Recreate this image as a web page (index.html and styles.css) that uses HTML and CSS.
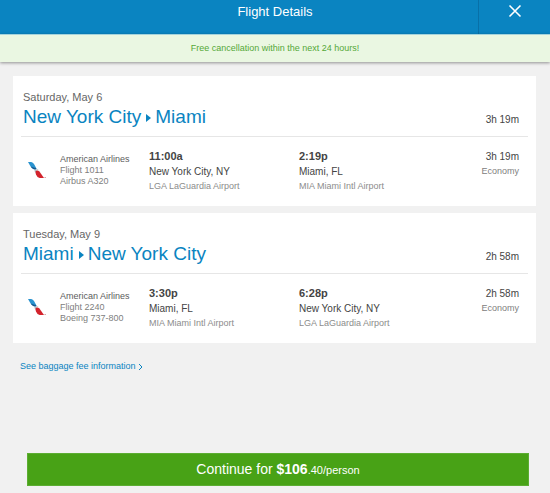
FILE: index.html
```
<!DOCTYPE html>
<html lang="en">
<head>
  <meta charset="UTF-8">
  <meta name="viewport" content="width=device-width, initial-scale=1.0">
  <title>Flight Details</title>
  <link rel="stylesheet" href="styles.css">
</head>
<body>
  <svg class="symbols" aria-hidden="true">
    <symbol id="aa-logo" viewBox="0 0 18 16">
      <path d="M0 0H3.2Q5 .3 6 2L8.6 6.8 7.6 7.4Q3.4 6.6 2 3.6z" fill="#2a93cf"/>
      <path d="M2.6 4.4L8.2 6.2 8 7.6Q4.2 7.4 2.6 4.4z" fill="#17598f"/>
      <path d="M6.4 8.2Q8 6.6 10.6 7.4L8.6 8.8Q7.4 10 7.8 11.6 6.6 10.2 6.4 8.2z" fill="#b4bcc3"/>
      <path d="M7.6 9.2Q9.6 7.8 11.4 9.6L16 16H11.6Q9 15.6 8 12.6 7.4 10.6 7.6 9.2z" fill="#d3232c"/>
      <path d="M16.4 15h1.6v1h-1.6z" fill="#d8a9ac"/>
    </symbol>
  </svg>

  <header class="header">
    <h1>Flight Details</h1>
    <button class="close" type="button" aria-label="Close">
      <svg width="14" height="14" viewBox="0 0 14 14"><path d="M1.5 1.5l11 11M12.5 1.5l-11 11" stroke="#fff" stroke-width="1.6"/></svg>
    </button>
  </header>
  <p class="notice">Free cancellation within the next 24 hours!</p>

  <main>
    <section class="card">
      <div class="card-head">
        <div>
          <p class="date">Saturday, May 6</p>
          <h2>New York City<span class="arrow"></span>Miami</h2>
        </div>
        <span class="duration">3h 19m</span>
      </div>
      <div class="flight">
        <svg class="logo" role="img" aria-label="American Airlines"><use href="#aa-logo"/></svg>
        <div class="airline">
          <p class="name">American Airlines</p>
          <p>Flight 1011</p>
          <p>Airbus A320</p>
        </div>
        <div class="stop">
          <p class="time">11:00a</p>
          <p class="city">New York City, NY</p>
          <p class="airport">LGA LaGuardia Airport</p>
        </div>
        <div class="stop">
          <p class="time">2:19p</p>
          <p class="city">Miami, FL</p>
          <p class="airport">MIA Miami Intl Airport</p>
        </div>
        <div class="leg">
          <p class="duration">3h 19m</p>
          <p class="cabin">Economy</p>
        </div>
      </div>
    </section>

    <section class="card">
      <div class="card-head">
        <div>
          <p class="date">Tuesday, May 9</p>
          <h2>Miami<span class="arrow"></span>New York City</h2>
        </div>
        <span class="duration">2h 58m</span>
      </div>
      <div class="flight">
        <svg class="logo" role="img" aria-label="American Airlines"><use href="#aa-logo"/></svg>
        <div class="airline">
          <p class="name">American Airlines</p>
          <p>Flight 2240</p>
          <p>Boeing 737-800</p>
        </div>
        <div class="stop">
          <p class="time">3:30p</p>
          <p class="city">Miami, FL</p>
          <p class="airport">MIA Miami Intl Airport</p>
        </div>
        <div class="stop">
          <p class="time">6:28p</p>
          <p class="city">New York City, NY</p>
          <p class="airport">LGA LaGuardia Airport</p>
        </div>
        <div class="leg">
          <p class="duration">2h 58m</p>
          <p class="cabin">Economy</p>
        </div>
      </div>
    </section>

    <a class="baggage" href="#">See baggage fee information
      <svg width="5" height="8" viewBox="0 0 5 8"><path d="M1 1l3 3-3 3" fill="none" stroke="currentColor"/></svg>
    </a>
  </main>

  <footer>
    <button class="continue" type="button">Continue for <b>$106</b><small>.40/person</small></button>
  </footer>
</body>
</html>
```
FILE: styles.css
```
* {
  box-sizing: border-box;
}
body {
  margin: 0;
  min-height: 100vh;
  display: flex;
  flex-direction: column;
  background-color: #f1f1f1;
  color: #444;
  font-family: "Liberation Sans", Arial, sans-serif;
  font-size: 9px;
}
h1, h2, p {
  margin: 0;
  font-weight: normal;
}
button {
  border: none;
  padding: 0;
  color: #fff;
  font-family: inherit;
  cursor: pointer;
}
.symbols {
  position: absolute;
  width: 0;
  height: 0;
}

/* Header */
.header {
  display: grid;
  grid-template-columns: 72px 1fr 72px;
  height: 34px;
  background-color: #0a84c1;
  color: #fff;
}
.header h1 {
  grid-column: 2;
  font-size: 13px;
  line-height: 24px;
  text-align: center;
}
.close {
  padding-bottom: 14px;
  background: none;
  border-left: 1px solid #0870a8;
}
.close svg {
  vertical-align: middle;
}
.notice {
  background-color: #eaf7e2;
  border-top: 1px solid #a5d3dc;
  box-shadow: 0 1px 3px rgba(0, 0, 0, .4);
  color: #55a838;
  line-height: 27px;
  text-align: center;
}

/* Flight cards */
main {
  padding: 14px 14px 0 13px;
}
.card {
  margin-bottom: 7px;
  padding: 13px 8px 12px;
  background-color: #fff;
}
.card-head {
  display: flex;
  justify-content: space-between;
  align-items: flex-end;
  padding: 0 9px 7px 2px;
  border-bottom: 1px solid #e6e6e6;
}
.date {
  color: #666;
  font-size: 11px;
  line-height: 16px;
}
h2 {
  color: #0a84c1;
  font-size: 19px;
  line-height: 24px;
}
.arrow {
  display: inline-block;
  margin: 0 4px 0 5px;
  border-left: 5px solid #0a84c1;
  border-top: 4px solid transparent;
  border-bottom: 4px solid transparent;
  vertical-align: 1px;
}
.duration {
  font-size: 10px;
  line-height: 18px;
}
.flight {
  display: grid;
  grid-template-columns: 32px 89px 150px 150px 1fr;
  padding: 12px 9px 0 7px;
}
.logo {
  width: 18px;
  height: 16px;
  margin-top: 13px;
}
.airline {
  padding-top: 5px;
  color: #808080;
  line-height: 11px;
}
.airline .name {
  color: #5c5c5c;
}
.time {
  font-size: 11px;
  font-weight: bold;
  line-height: 15px;
}
.city {
  font-size: 10px;
  line-height: 15px;
}
.airport {
  color: #8c8c8c;
  line-height: 15px;
}
.leg {
  text-align: right;
}
.leg .duration {
  line-height: 15px;
}
.cabin {
  color: #808080;
  line-height: 15px;
}
.baggage {
  display: inline-block;
  margin: 9px 7px;
  color: #0a84c1;
  line-height: 14px;
  text-decoration: none;
}
.baggage svg {
  vertical-align: middle;
}

/* Footer */
footer {
  margin-top: auto;
  padding: 0 21px 7px 27px;
}
.continue {
  width: 100%;
  height: 33px;
  padding-bottom: 2px;
  background-color: #48a216;
  border: 1px solid #5cad32;
  font-size: 14px;
}
.continue small {
  font-size: 11px;
}
```
